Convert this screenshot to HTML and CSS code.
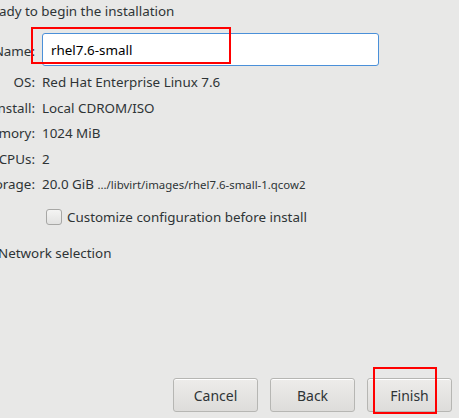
FILE: index.html
```html
<!DOCTYPE html>
<html lang="en">
<head>
    <meta charset="UTF-8">
    <meta name="viewport" content="width=device-width, initial-scale=1.0">
    <title>New VM</title>
    <link rel="stylesheet" href="styles.css">
</head>
<body>
    <div class="page">
        <p class="heading">Ready to begin the installation</p>

        <div class="summary">
            <label class="label" for="vm-name">Name:</label>
            <div class="value name-cell">
                <input id="vm-name" class="name-input" type="text" value="rhel7.6-small">
                <span class="mark mark-name"></span>
            </div>

            <span class="label">OS:</span>
            <span class="value">Red Hat Enterprise Linux 7.6</span>

            <span class="label">Install:</span>
            <span class="value">Local CDROM/ISO</span>

            <span class="label">Memory:</span>
            <span class="value">1024 MiB</span>

            <span class="label">CPUs:</span>
            <span class="value">2</span>

            <span class="label">Storage:</span>
            <span class="value">20.0 GiB <small class="path">.../libvirt/images/rhel7.6-small-1.qcow2</small></span>
        </div>

        <label class="customize">
            <span class="check"></span>
            Customize configuration before install
        </label>

        <div class="expander">Network selection</div>
    </div>

    <div class="actions">
        <button class="btn">Cancel</button>
        <button class="btn">Back</button>
        <button class="btn btn-finish">Finish<span class="mark mark-finish"></span></button>
    </div>
</body>
</html>
```

FILE: styles.css
```css
html, body {
    height: 100%;
}

body {
    margin: 0;
    background: #e8e8e7;
    color: #2e3436;
    font-family: "Noto Sans", "DejaVu Sans", sans-serif;
    font-size: 13.4px;
    overflow: hidden;
    display: flex;
    flex-direction: column;
}

.page {
    flex: 1;
    margin-left: -45px;
}

.heading {
    margin: 2px 0 0 28px;
    line-height: 18px;
}

.summary {
    display: grid;
    grid-template-columns: 80px auto;
    column-gap: 7px;
    align-items: center;
    margin-top: 13px;
}

.label {
    text-align: right;
    white-space: nowrap;
    line-height: 25.5px;
}

.value {
    white-space: nowrap;
    line-height: 25.5px;
}

.name-cell {
    position: relative;
    margin-bottom: 4px;
}

.name-input {
    display: block;
    box-sizing: border-box;
    width: 337px;
    height: 33px;
    padding: 0 8px;
    border: 1px solid #4a90d9;
    border-radius: 3px;
    background: #fff;
    color: #000;
    font: inherit;
    outline: none;
}

.path {
    font-size: 11.4px;
}

.customize {
    display: flex;
    align-items: center;
    gap: 5px;
    margin: 9px 0 0 91px;
    line-height: 20px;
}

.check {
    width: 14px;
    height: 14px;
    border: 1px solid #a7a7a5;
    border-radius: 3px;
    background: linear-gradient(#f4f4f3, #e2e2e1);
}

.expander {
    margin: 16px 0 0 43px;
    line-height: 20px;
}

.actions {
    display: flex;
    justify-content: flex-end;
    gap: 12px;
    padding: 0 7px 6px 0;
}

.btn {
    position: relative;
    width: 85px;
    height: 34px;
    border: 1px solid #b6b6b3;
    border-radius: 3px;
    background: linear-gradient(#edecea, #dddcda);
    color: #2e3436;
    font: inherit;
    font-size: 14px;
    box-shadow: inset 0 1px #fff;
}

/* red annotation frames drawn over the widgets */
.mark {
    position: absolute;
    border: 2px solid #f00;
    pointer-events: none;
}

.mark-name {
    left: -11px;
    top: -6px;
    width: 196px;
    height: 33px;
}

.mark-finish {
    left: 5px;
    top: -12px;
    width: 60px;
    height: 43px;
}
```
